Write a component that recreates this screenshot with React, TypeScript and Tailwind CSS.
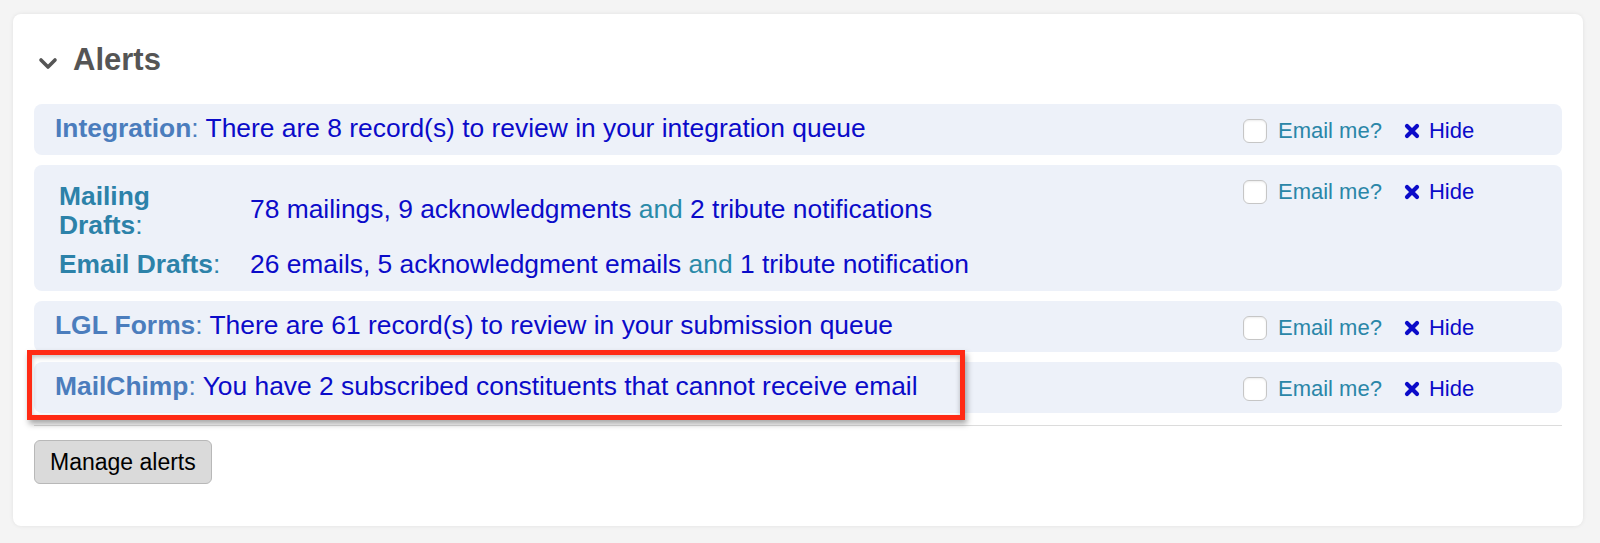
import React from 'react';

const labelBlue = 'text-[#4b7dbd]';
const labelTeal = 'text-[#2c82a9]';
const bodyBlue = 'text-[#0b0bc9]';

function HideIcon() {
  return (
    <svg width="16" height="16" viewBox="0 0 16 16" className="shrink-0">
      <path d="M3 3 L13 13 M13 3 L3 13" stroke="#0b0bc9" strokeWidth="4.2" strokeLinecap="round" />
    </svg>
  );
}

function AlertActions() {
  return (
    <div className="w-[319px] shrink-0 h-[29px] mt-[2px] flex items-center text-[22px]">
      <span className="w-[24px] h-[24px] rounded-[6px] border-[1.5px] border-[#c6c6c6] bg-white shadow-[inset_0_1px_2px_rgba(0,0,0,0.08)]" />
      <span className="ml-[11px] text-[#2a86a8]">Email me?</span>
      <span className="ml-[22px] flex items-center gap-[9px] text-[#0b0bc9]">
        <HideIcon />
        Hide
      </span>
    </div>
  );
}

function SimpleAlert({ label, text, children }: { label: string; text: string; children?: React.ReactNode }) {
  return (
    <div className="relative flex items-start justify-between rounded-[8px] bg-[#edf1f9] pl-[21px] py-[10px]">
      <div className="leading-[29px] text-[26.4px]">
        <span className={labelBlue}>
          <span className="font-bold">{label}</span>:
        </span>{' '}
        <span className={bodyBlue}>{text}</span>
      </div>
      <AlertActions />
      {children}
    </div>
  );
}

export default function App() {
  return (
    <div className="min-h-screen bg-[#f4f4f4] pt-[14px] pl-[13px] pr-[17px] font-['Liberation_Sans',Arial,sans-serif]">
      <div className="bg-white rounded-[8px] shadow-[0_0_4px_rgba(0,0,0,0.08)] px-[21px] pt-[28px] pb-[42px]">
        <div className="flex items-center h-[36px] pl-[4px]">
          <svg width="20" height="14" viewBox="0 0 20 14" className="mt-[7px]">
            <path d="M3 3 L10 10 L17 3" fill="none" stroke="#555555" strokeWidth="3.6" strokeLinecap="round" strokeLinejoin="round" />
          </svg>
          <h2 className="ml-[15px] text-[31px] font-bold text-[#555555] leading-[36px]">Alerts</h2>
        </div>

        <div className="mt-[26px] flex flex-col gap-[10px]">
          <SimpleAlert label="Integration" text="There are 8 record(s) to review in your integration queue" />

          <div className="flex items-start justify-between rounded-[8px] bg-[#edf1f9] pl-[21px] py-[10px]">
            <div className="grid grid-cols-[170px_1fr] gap-x-[21px] gap-y-[10px] items-center pl-[4px] pt-[7px] pb-[2px] text-[26.4px] leading-[29px]">
              <div className={labelTeal}>
                <div className="font-bold">Mailing</div>
                <div>
                  <span className="font-bold">Drafts</span>:
                </div>
              </div>
              <div className={`${bodyBlue} -mt-[3px]`}>
                78 mailings, 9 acknowledgments <span className="text-[#2a8aa8]">and</span> 2 tribute notifications
              </div>
              <div className={labelTeal}>
                <span className="font-bold">Email Drafts</span>:
              </div>
              <div className={bodyBlue}>
                26 emails, 5 acknowledgment emails <span className="text-[#2a8aa8]">and</span> 1 tribute notification
              </div>
            </div>
            <AlertActions />
          </div>

          <SimpleAlert label="LGL Forms" text="There are 61 record(s) to review in your submission queue" />

          <SimpleAlert label="MailChimp" text="You have 2 subscribed constituents that cannot receive email">
            <div className="absolute -left-[7px] -top-[12px] w-[938px] h-[70px] border-[5px] border-[#ff2a14] shadow-[2px_4px_6px_rgba(0,0,0,0.35),inset_0_2px_5px_rgba(0,0,0,0.25)] pointer-events-none" />
          </SimpleAlert>
        </div>

        <div className="mt-[12px] h-px bg-[#dcdcdc]" />

        <button className="mt-[14px] h-[44px] px-[15px] rounded-[6px] border border-[#b8b8b8] bg-[#dadada] text-[23px] text-black">
          Manage alerts
        </button>
      </div>
    </div>
  );
}
